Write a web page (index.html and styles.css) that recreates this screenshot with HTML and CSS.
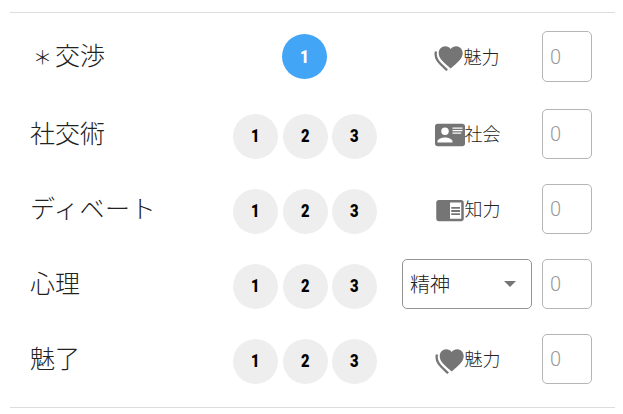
FILE: index.html
```html
<!DOCTYPE html>
<html lang="ja">
<head>
    <meta charset="UTF-8">
    <title>技能</title>
    <link rel="stylesheet" href="styles.css">
</head>
<body>
    <!-- アイコン -->
    <svg class="defs">
        <symbol id="heart" viewBox="0 0 30 30">
            <path d="M16.7 26.5C9.5 20.4 4.7 16.8 4.7 11.1C4.7 7.1 7.6 4.2 11.2 4.2C13.4 4.2 15.4 5.2 16.7 6.9C18 5.2 20 4.2 22.2 4.2C25.8 4.2 28.7 7.1 28.7 11.1C28.7 16.8 23.9 20.4 16.7 26.5Z"/>
            <path d="M2 9.5C-.2 17.2 6.8 22.4 13.2 28.2" fill="none" stroke="currentColor" stroke-width="2.3"/>
        </symbol>
        <symbol id="card" viewBox="0 0 24 24">
            <path d="M2,3H22C23.05,3 24,3.95 24,5V19C24,20.05 23.05,21 22,21H2C0.95,21 0,20.05 0,19V5C0,3.95 0.95,3 2,3M14,6V7H22V6H14M14,8V9H22V8H14M14,10V11H21V10H14M8,13.91C6,13.91 2,15 2,17V18H14V17C14,15 10,13.91 8,13.91M8,6A3,3 0 0,0 5,9A3,3 0 0,0 8,12A3,3 0 0,0 11,9A3,3 0 0,0 8,6Z"/>
        </symbol>
        <symbol id="reader" viewBox="0 0 24 24">
            <path d="M13 12h7v1.5h-7zm0-2.5h7V11h-7zm0 5h7V16h-7zM21 4H3c-1.1 0-2 .9-2 2v13c0 1.1.9 2 2 2h18c1.1 0 2-.9 2-2V6c0-1.1-.9-2-2-2zm0 15h-9V6h9v13z"/>
        </symbol>
    </svg>

    <div class="skills">
        <div class="row first">
            <div class="name"><span class="mark">＊</span>交渉</div>
            <div class="levels">
                <button class="level active"><span>1</span></button>
            </div>
            <div class="ability"><svg class="icon"><use href="#heart"/></svg><span>魅力</span></div>
            <input type="text" class="value" placeholder="0">
        </div>
        <div class="row">
            <div class="name">社交術</div>
            <div class="levels">
                <button class="level"><span>1</span></button>
                <button class="level"><span>2</span></button>
                <button class="level"><span>3</span></button>
            </div>
            <div class="ability"><svg class="icon"><use href="#card"/></svg><span>社会</span></div>
            <input type="text" class="value" placeholder="0">
        </div>
        <div class="row">
            <div class="name kana">ディベート</div>
            <div class="levels">
                <button class="level"><span>1</span></button>
                <button class="level"><span>2</span></button>
                <button class="level"><span>3</span></button>
            </div>
            <div class="ability"><svg class="icon"><use href="#reader"/></svg><span>知力</span></div>
            <input type="text" class="value" placeholder="0">
        </div>
        <div class="row">
            <div class="name">心理</div>
            <div class="levels">
                <button class="level"><span>1</span></button>
                <button class="level"><span>2</span></button>
                <button class="level"><span>3</span></button>
            </div>
            <div class="select"><span>精神</span><i class="arrow"></i></div>
            <input type="text" class="value" placeholder="0">
        </div>
        <div class="row">
            <div class="name">魅了</div>
            <div class="levels">
                <button class="level"><span>1</span></button>
                <button class="level"><span>2</span></button>
                <button class="level"><span>3</span></button>
            </div>
            <div class="ability"><svg class="icon"><use href="#heart"/></svg><span>魅力</span></div>
            <input type="text" class="value" placeholder="0">
        </div>
    </div>
</body>
</html>
```
FILE: styles.css
```css
* {
    box-sizing: border-box;
}

body {
    margin: 0;
    padding: 12px 8px 0 10px;
    background-color: #fff;
    color: #222;
    font-family: "Noto Sans CJK JP", sans-serif;
    font-weight: 300;
}

.defs {
    display: none;
}

.skills {
    height: 396px;
    padding-top: 5px;
    border-top: 1px solid #ddd;
    border-bottom: 1px solid #ddd;
}

.row {
    display: grid;
    grid-template-columns: 203px 169px 130px 50px;
    align-items: center;
    height: 75px;
    padding-left: 20px;
}

.row.first {
    height: 78px;
    padding-bottom: 1px;
}

.name {
    padding-bottom: 4px;
    font-size: 25px;
    line-height: 36px;
}

.first .name {
    padding-bottom: 3px;
}

.kana {
    letter-spacing: 0.6px;
}

.mark {
    display: inline-block;
    width: 25px;
    font-size: 19px;
    text-align: center;
}

.levels {
    display: flex;
    gap: 4.5px;
    width: 144px;
    justify-content: center;
    padding-top: 5px;
}

.first .levels {
    width: 143px;
    padding-top: 0;
}

.level {
    flex: none;
    width: 45px;
    height: 45px;
    padding: 0 0 1px;
    border: none;
    border-radius: 50%;
    background-color: #eee;
    color: #000;
    font-family: Roboto, sans-serif;
    font-size: 18px;
    font-weight: 900;
    cursor: pointer;
}

.level span {
    display: inline-block;
    transform: scaleX(0.82);
}

.level.active {
    background-color: #42a5f5;
    color: #fff;
    font-size: 19px;
}

.ability {
    display: flex;
    align-items: center;
    justify-content: center;
    padding: 0 0 1px 1px;
    font-size: 18px;
    line-height: 26px;
}

.first .ability {
    padding: 0 1px 2px 0;
}

.icon {
    width: 30px;
    height: 30px;
    margin-top: 4px;
    fill: #757575;
    color: #757575;
}

.first .icon {
    margin-top: 2px;
}

.select {
    display: flex;
    align-items: center;
    justify-content: space-between;
    height: 50px;
    padding: 0 15px 0 7px;
    border: 1px solid #949494;
    border-radius: 5px;
    font-size: 20px;
}

.arrow {
    border: 6px solid transparent;
    border-top-color: #757575;
    border-bottom: none;
}

.value {
    width: 50px;
    height: 50px;
    margin-left: 10px;
    padding: 0 7px;
    border: 1px solid #b5b5b5;
    border-radius: 5px;
    font-family: Roboto, sans-serif;
    font-size: 20px;
    font-weight: 300;
}

.first .value {
    height: 51px;
}

.value::placeholder {
    color: #999;
}
```
